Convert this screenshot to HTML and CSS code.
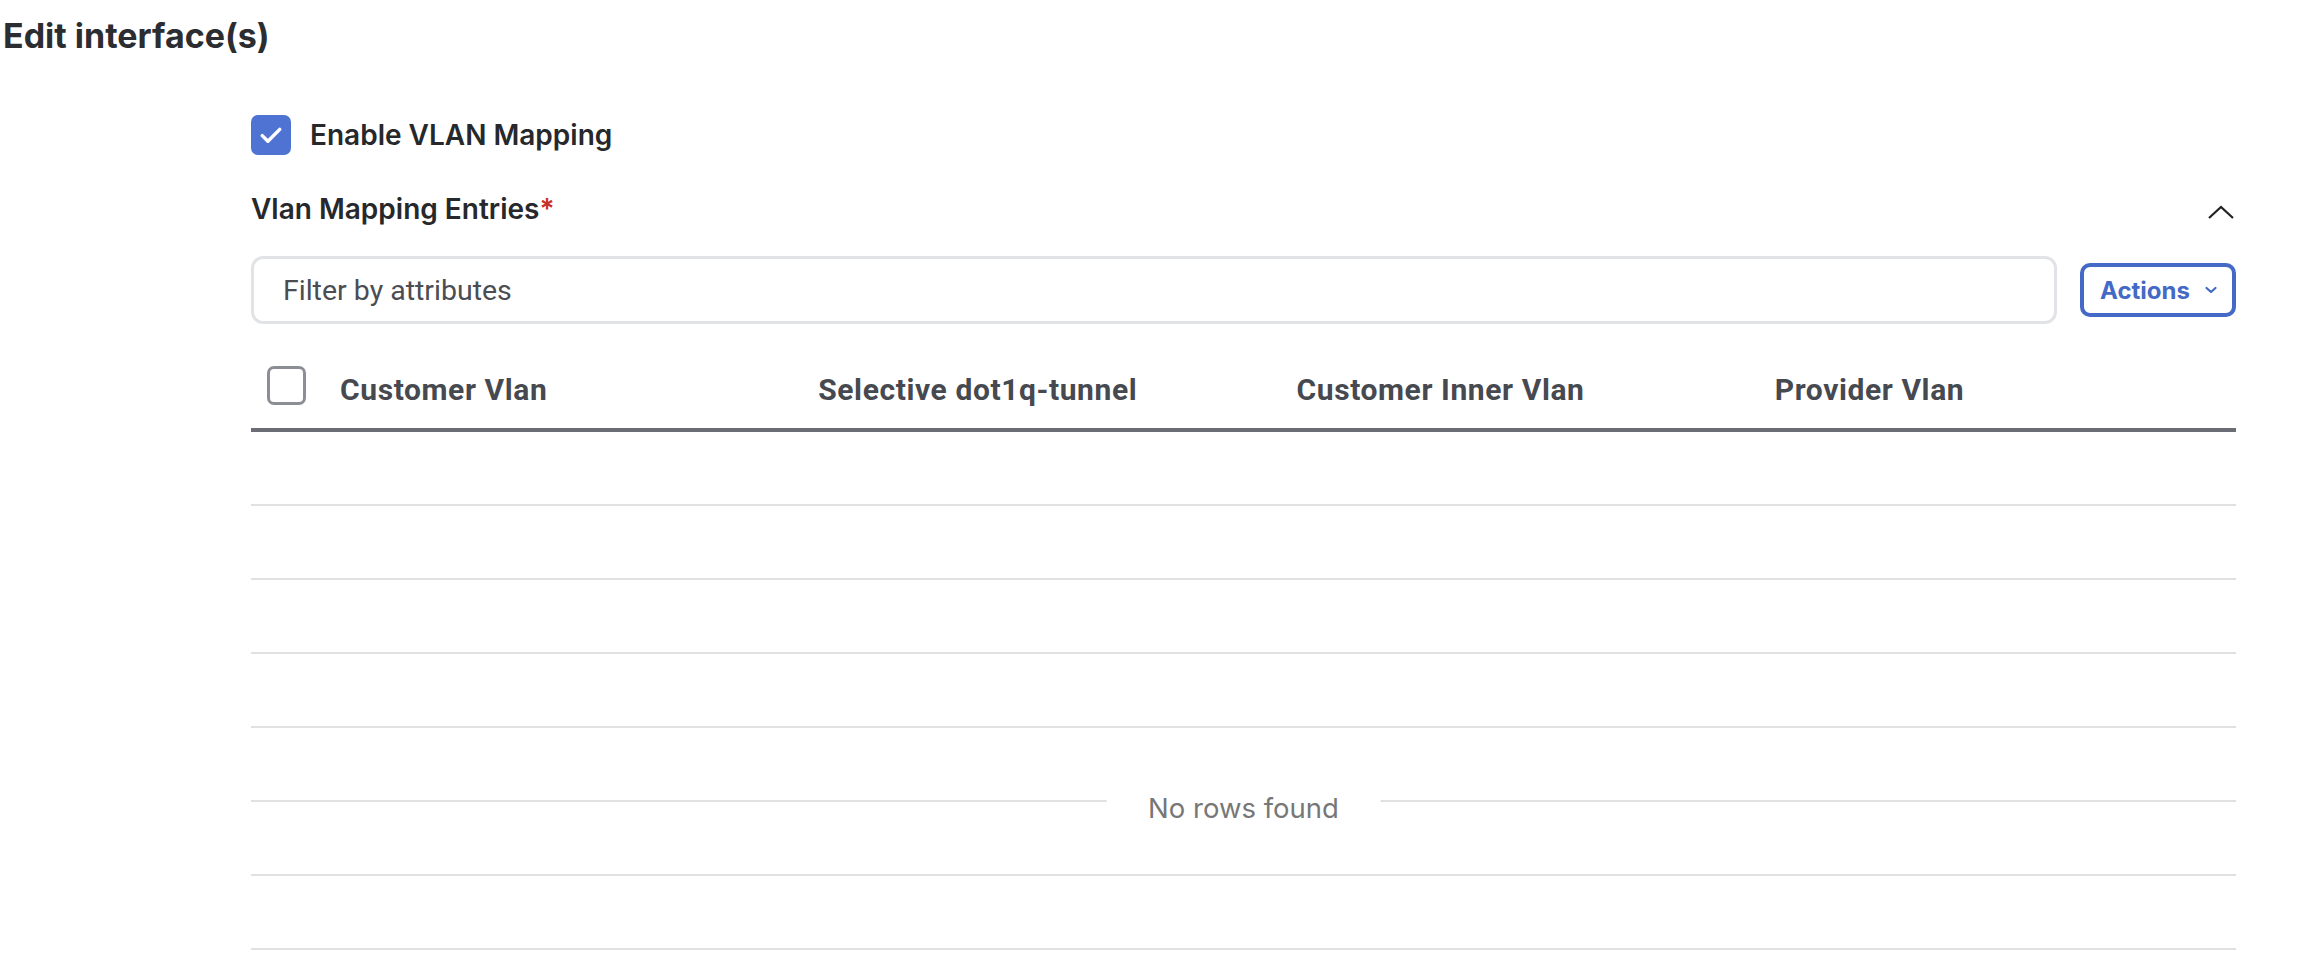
FILE: index.html
```html
<!DOCTYPE html>
<html>
<head>
<meta charset="utf-8">
<link rel="stylesheet" href="styles.css">
</head>
<body>
<div class="page">
  <h1 class="title">Edit interface(s)</h1>
  <div class="form">
    <label class="enable">
      <span class="cb cb-checked">
        <svg width="30" height="30" viewBox="0 0 24 24"><path d="M5 12.5l4.5 4.5L19 7.5" fill="none" stroke="#fff" stroke-width="2.8" stroke-linecap="round" stroke-linejoin="round"/></svg>
      </span>
      <span class="enable-text">Enable VLAN Mapping</span>
    </label>
    <div class="section-head">
      <span class="section-title">Vlan Mapping Entries<span class="req">*</span></span>
      <svg class="chev-up" width="28" height="16" viewBox="0 0 28 16"><path d="M2 14L14 3l12 11" fill="none" stroke="#222" stroke-width="2.2"/></svg>
    </div>
    <div class="toolbar">
      <div class="filter">Filter by attributes</div>
      <button class="actions">Actions
        <svg width="14" height="10" viewBox="0 0 14 10"><path d="M2.5 3l4.5 4 4.5-4" fill="none" stroke="#4469c6" stroke-width="2.2" stroke-linecap="round" stroke-linejoin="round"/></svg>
      </button>
    </div>
    <div class="table">
      <div class="thead">
        <div class="cell cell-cb"><span class="cb cb-empty"></span></div>
        <div class="cell">Customer Vlan</div>
        <div class="cell">Selective dot1q-tunnel</div>
        <div class="cell">Customer Inner Vlan</div>
        <div class="cell">Provider Vlan</div>
      </div>
      <div class="tbody">
        <div class="row"></div>
        <div class="row"></div>
        <div class="row"></div>
        <div class="row"></div>
        <div class="row"></div>
        <div class="row"></div>
        <div class="row"></div>
        <div class="row"></div>
        <div class="empty">No rows found</div>
      </div>
    </div>
  </div>
</div>
</body>
</html>
```
FILE: styles.css
```css
html, body {
  margin: 0;
  padding: 0;
  background: #fff;
  overflow: hidden;
}
.page {
  height: 966px;
  overflow: hidden;
}
.title {
  margin: 0;
  padding: 16px 0 0 3px;
  font-family: Inter, "Noto Sans", sans-serif;
  font-weight: 700;
  font-size: 34px;
  line-height: 40px;
  color: #2b2d31;
}
.form {
  margin-left: 251px;
  width: 1985px;
}
.enable {
  display: flex;
  align-items: center;
  gap: 19px;
  margin-top: 59px;
  height: 40px;
}
.cb {
  display: inline-flex;
  align-items: center;
  justify-content: center;
  box-sizing: border-box;
  width: 40px;
  height: 40px;
  border-radius: 7px;
}
.cb-checked {
  background: #4f73d3;
}
.cb-empty {
  width: 39px;
  height: 39px;
  border: 3px solid #8b8e94;
  border-radius: 7px;
  background: #fff;
}
.enable-text {
  font-family: Inter, "Noto Sans", sans-serif;
  font-weight: 600;
  font-size: 28px;
  color: #26282c;
}
.section-head {
  display: flex;
  align-items: center;
  justify-content: space-between;
  margin-top: 34px;
  height: 40px;
}
.section-title {
  font-family: Inter, "Noto Sans", sans-serif;
  font-weight: 600;
  font-size: 28px;
  color: #26282c;
}
.req {
  color: #c9302c;
}
.chev-up {
  margin-right: 1px;
  margin-top: 6px;
}
.toolbar {
  display: flex;
  align-items: center;
  gap: 23px;
  margin-top: 27px;
}
.filter {
  flex: 1;
  box-sizing: border-box;
  height: 68px;
  border: 3px solid #e2e3e6;
  border-radius: 12px;
  padding-left: 29px;
  display: flex;
  align-items: center;
  font-family: Roboto, "Noto Sans", sans-serif;
  font-size: 28.5px;
  color: #4b4d52;
}
.actions {
  box-sizing: border-box;
  width: 156px;
  height: 54px;
  border: 4px solid #4469c6;
  border-radius: 10px;
  background: #fff;
  display: flex;
  align-items: center;
  justify-content: center;
  gap: 14px;
  padding: 0 0 0 2px;
  font-family: Inter, "Noto Sans", sans-serif;
  font-weight: 700;
  font-size: 24px;
  color: #4469c6;
}
.table {
  margin-top: 24px;
}
.thead {
  display: grid;
  grid-template-columns: 72px repeat(4, 1fr);
  align-items: center;
  height: 80px;
  border-bottom: 4px solid #6b6d74;
}
.cell {
  padding-left: 17px;
  font-family: Roboto, "Noto Sans", sans-serif;
  font-weight: 700;
  font-size: 30px;
  letter-spacing: 0.6px;
  color: #46494f;
  padding-top: 2px;
}
.cell-cb {
  padding-left: 16px;
  padding-top: 0;
  padding-bottom: 6px;
  display: flex;
}
.tbody {
  position: relative;
}
.row {
  height: 72px;
  border-bottom: 2px solid #e0e1e2;
}
.empty {
  position: absolute;
  left: 50%;
  top: 360px;
  transform: translateX(-50%);
  background: #fff;
  padding: 0 42px;
  font-family: Inter, "Noto Sans", sans-serif;
  font-size: 27.5px;
  line-height: 32px;
  color: #777;
}
```
